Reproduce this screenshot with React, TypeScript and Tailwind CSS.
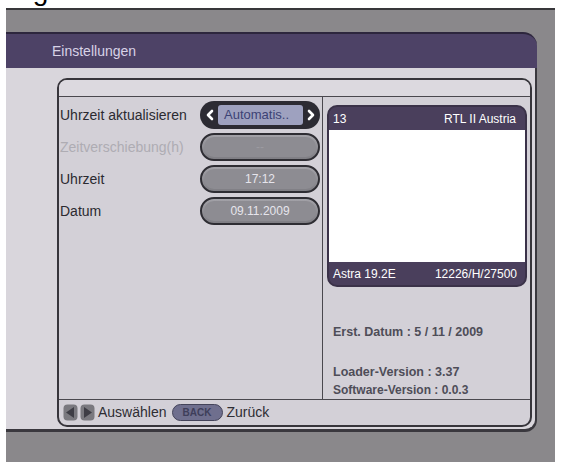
import React from 'react';

const Chevron = ({ dir }: { dir: 'l' | 'r' }) => (
  <svg width="10" height="12" viewBox="0 0 10 12">
    <polyline
      points={dir === 'l' ? '7,2 3,6 7,10' : '3,2 7,6 3,10'}
      fill="none"
      stroke="#ffffff"
      strokeWidth="2.6"
      strokeLinecap="round"
      strokeLinejoin="round"
    />
  </svg>
);

const NavIcon = ({ dir }: { dir: 'l' | 'r' }) => (
  <svg width="15" height="17" viewBox="0 0 15 17">
    <rect x="0.5" y="0.5" width="14" height="16" rx="4" fill="#7a797f" />
    <polygon points={dir === 'l' ? '11,3 3,8.5 11,14' : '4,3 12,8.5 4,14'} fill="#3e3d45" />
  </svg>
);

const ValuePill = ({ value, dim }: { value: string; dim?: boolean }) => (
  <div className="w-[120px] h-[28px] rounded-full border-2 border-[#2e2d33] bg-gradient-to-b from-[#a3a2a8] to-[#7f7e84] p-[2px]">
    <div className="h-full rounded-full bg-[#8d8c92] flex items-center justify-center">
      <span className={dim ? 'text-[12px] text-[#9c9ba1]' : 'text-[12px] text-[#e6e5ec]'}>{value}</span>
    </div>
  </div>
);

const App = () => {
  return (
    <div className="w-[567px] h-[462px] bg-white overflow-hidden font-['Liberation_Sans',Arial,sans-serif]">
      <div className="h-[8px] overflow-hidden">
        <div className="text-[28px] leading-[28px] -mt-[23px] text-black">Zugeben</div>
      </div>

      <div className="flex h-[454px]">
        <div className="w-[6px] bg-white" />

        <div className="w-[549px] bg-[#8a888b] border-t-2 border-[#38373a] pt-[22px] flex flex-col">
          <div className="mr-[18px] h-[36px] bg-[#4d4266] border-t-2 border-[#2d263d] rounded-tr-[14px] flex items-center pl-[46px]">
            <span className="text-[14px] text-[#d8d2e6]">Einstellungen</span>
          </div>

          <div className="mr-[18px] h-[364px] bg-[#d9d6dc] rounded-br-[12px] border-b-[3px] border-r-2 border-[#3a383e] pl-[51px] pr-[3px] pt-[10px]">
            <div className="h-[349px] border-2 border-[#37353b] rounded-[10px] bg-[#d3d0d7] flex flex-col overflow-hidden">
              <div className="h-[17px] bg-[#dcd9df] border-b border-[#4a484e]" />

              <div className="h-[303px] flex border-b border-[#4a484e]">
                <div className="w-[264px] border-r border-[#4a484e] pt-[4px] pl-[1px] flex flex-col gap-[4px]">
                  <div className="flex items-center h-[28px]">
                    <span className="w-[140px] text-[14px] text-[#2b2a30]">Uhrzeit aktualisieren</span>
                    <div className="w-[120px] h-[28px] rounded-full bg-[#2c2b33] flex items-center pl-[5px] pr-[4px] gap-[3px]">
                      <Chevron dir="l" />
                      <div className="flex-1 h-[20px] bg-[#9ea1bf] rounded-[3px] flex items-center pl-[6px]">
                        <span className="text-[13px] text-[#3c4275]">Automatis..</span>
                      </div>
                      <Chevron dir="r" />
                    </div>
                  </div>
                  <div className="flex items-center h-[28px]">
                    <span className="w-[140px] text-[14px] text-[#aeacb3]">Zeitverschiebung(h)</span>
                    <ValuePill value="--" dim />
                  </div>
                  <div className="flex items-center h-[28px]">
                    <span className="w-[140px] text-[14px] text-[#2b2a30]">Uhrzeit</span>
                    <ValuePill value="17:12" />
                  </div>
                  <div className="flex items-center h-[28px]">
                    <span className="w-[140px] text-[14px] text-[#2b2a30]">Datum</span>
                    <ValuePill value="09.11.2009" />
                  </div>
                </div>

                <div className="flex-1 pl-[4px] pt-[8px]">
                  <div className="w-[200px] h-[182px] rounded-[10px] border-2 border-[#3b3249] bg-[#4a3f5c] overflow-hidden flex flex-col">
                    <div className="h-[23px] flex items-center justify-between pl-[4px] pr-[9px] text-[12px] text-white">
                      <span>13</span>
                      <span>RTL II Austria</span>
                    </div>
                    <div className="flex-1 bg-white" />
                    <div className="h-[23px] flex items-center justify-between pl-[4px] pr-[8px] text-[12px] text-white">
                      <span>Astra 19.2E</span>
                      <span>12226/H/27500</span>
                    </div>
                  </div>
                  <div className="ml-[6px] mt-[38px] text-[12.5px] leading-[14px] font-bold text-[#4e4d58]">
                    Erst. Datum : 5 / 11 / 2009
                  </div>
                  <div className="ml-[6px] mt-[26px] text-[12.5px] leading-[14px] font-bold text-[#4e4d58]">
                    Loader-Version : 3.37
                  </div>
                  <div className="ml-[6px] mt-[4px] text-[12px] leading-[14px] font-bold text-[#4e4d58]">
                    Software-Version : 0.0.3
                  </div>
                </div>
              </div>

              <div className="flex-1 flex items-center pl-[4px]">
                <NavIcon dir="l" />
                <div className="w-[2px]" />
                <NavIcon dir="r" />
                <span className="ml-[3px] text-[14px] text-[#2e2d33]">Auswählen</span>
                <div className="ml-[5px] w-[51px] h-[17px] rounded-full bg-[#6f6f8e] border border-[#44445a] flex items-center justify-center">
                  <span className="text-[10px] font-bold text-[#3e3e5a]">BACK</span>
                </div>
                <span className="ml-[4px] text-[14px] text-[#2e2d33]">Zurück</span>
              </div>
            </div>
          </div>
        </div>

        <div className="flex-1 bg-white" />
      </div>
    </div>
  );
};

export default App;
